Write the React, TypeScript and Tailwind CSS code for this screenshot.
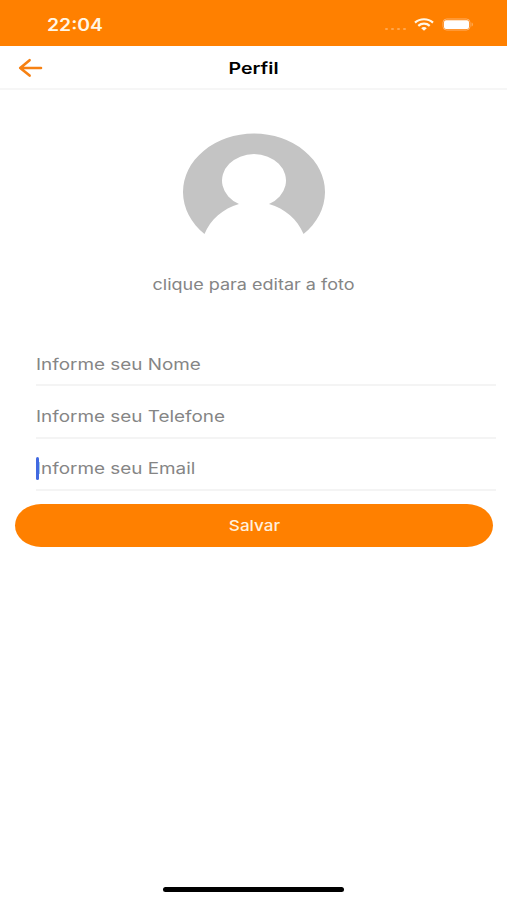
import React from "react";

const fields = [
  { name: "nome", label: "Informe seu Nome", focused: false },
  { name: "telefone", label: "Informe seu Telefone", focused: false },
  { name: "email", label: "Informe seu Email", focused: true },
];

function StatusBar() {
  return (
    <div className="flex h-[46px] items-center justify-between bg-[#ff8000] pl-[47px] pr-[31px] pt-[3px]">
      <span className="mt-[2px] origin-left scale-x-[1.14] text-[17px] font-semibold leading-none text-[#fff6e6]">
        22:04
      </span>
      <div className="flex items-center">
        <div className="mr-[8px] mt-[8px] flex gap-[3px]">
          <span className="h-[2px] w-[3px] rounded-full bg-[#ffa64d]" />
          <span className="h-[2px] w-[3px] rounded-full bg-[#ffa64d]" />
          <span className="h-[2px] w-[3px] rounded-full bg-[#ffa64d]" />
          <span className="h-[2px] w-[3px] rounded-full bg-[#ffa64d]" />
        </div>
        <svg width="20" height="13" viewBox="0 0 20 13" fill="none" stroke="#fff6e6" strokeWidth="2.2">
          <path d="M1 4.6C6 0.1 14 0.1 19 4.6" />
          <path d="M4.3 7.8C7.5 5 12.5 5 15.7 7.8" />
          <path d="M7.2 10.2C8.800 8.700 11.200 8.700 12.800 10.200L10 12.800Z" fill="#fff6e6" stroke="none" />
        </svg>
        <svg className="ml-[8px]" width="34" height="13" viewBox="0 0 34 13" fill="none">
          <rect x="1" y="1" width="27" height="11" rx="3.5" stroke="#ffb068" />
          <rect x="2" y="2.3" width="25" height="8.6" rx="2" fill="#fff" />
          <path d="M29.5 4.5C31.6 5.2 31.6 7.8 29.5 8.5Z" fill="#ffa64d" />
        </svg>
      </div>
    </div>
  );
}

function Header() {
  return (
    <header className="grid h-[44px] grid-cols-3 items-center border-b-2 border-[#f6f6f6]">
      <button className="ml-[18px] mt-[2px] w-[25px]" aria-label="Voltar">
        <svg width="25" height="20" viewBox="0 0 25 20" fill="none" stroke="#f68113" strokeWidth="2.6" strokeLinecap="round" strokeLinejoin="round">
          <path d="M11.6 2.2L2.2 10L11.6 17.6M2.2 10H23" />
        </svg>
      </button>
      <h1 className="mt-[2px] scale-x-[1.22] text-center text-[16px] font-semibold leading-none text-black">
        Perfil
      </h1>
    </header>
  );
}

function Avatar() {
  return (
    <svg className="mx-auto mt-[43px] block" width="143" height="102" viewBox="0 0 143 102">
      <path
        d="M22.5 101A71 58.5 0 1 1 121.5 101C115.5 86.5 103 75.5 87 71A32 26.5 0 1 0 57 71C41 75.5 28.5 86.5 22.5 101Z"
        fill="#c4c4c4"
      />
    </svg>
  );
}

export default function App() {
  return (
    <main className="flex h-[900px] w-[507px] flex-col overflow-hidden bg-white font-['Inter',sans-serif]">
      <StatusBar />
      <Header />

      <Avatar />
      <p className="mt-[41px] scale-x-[1.2] text-center text-[15px] leading-[18px] text-[#858585]">
        clique para editar a foto
      </p>

      <form className="mt-[40px] flex flex-col">
        {fields.map((field) => (
          <label
            key={field.name}
            className="relative ml-[36px] mr-[11px] flex h-[52.3px] items-center border-b-2 border-[#f4f4f4] pt-[9px]"
          >
            <span className="origin-left scale-x-[1.18] whitespace-nowrap text-[16px] leading-none text-[#858585]">
              {field.label}
            </span>
            {field.focused && (
              <span className="absolute left-0 top-[18px] h-[23px] w-[3px] rounded-full bg-[#4169e1]" />
            )}
          </label>
        ))}

        <button
          type="button"
          className="ml-[15px] mr-[14px] mt-[13px] h-[43px] rounded-[26px/21.5px] bg-[#ff8000]"
        >
          <span className="mt-[2px] inline-block scale-x-[1.14] text-[15px] font-medium leading-none text-[#fff0dc]">
            Salvar
          </span>
        </button>
      </form>

      <div className="mx-auto mb-[8px] mt-auto h-[5px] w-[181px] rounded-full bg-black" />
    </main>
  );
}
